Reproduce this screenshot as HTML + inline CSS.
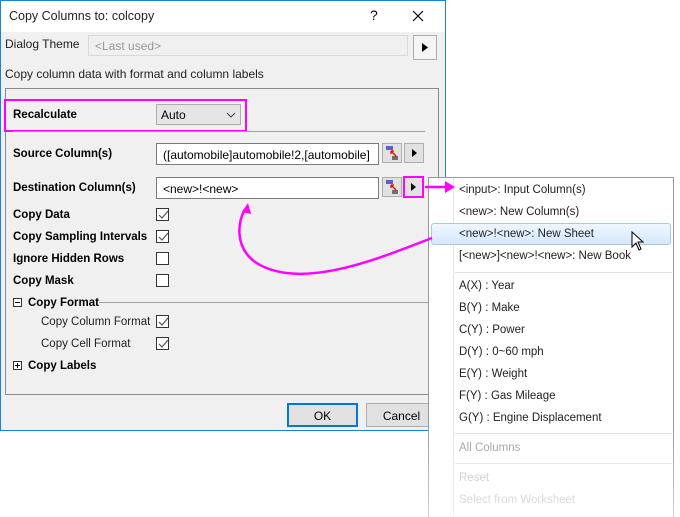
<!DOCTYPE html>
<html><head><meta charset="utf-8"><style>
*{margin:0;padding:0;box-sizing:border-box}
body{width:680px;height:517px;background:#fff;position:relative;overflow:hidden;font-family:"Liberation Sans",sans-serif;font-size:12px;color:#000}
.a{position:absolute}
.dlg{left:0;top:0;width:446px;height:431px;border:1px solid #1883d7;background:#f0f0f0}
.title{left:1px;top:1px;width:444px;height:31px;background:#fff}
.b{font-weight:bold;font-size:11.5px}
.cb{width:13px;height:13px;border:1px solid #333;background:#fff}
.cb svg{position:absolute;left:1px;top:1px}
.btn{background:#e1e1e1;border:1px solid #adadad;text-align:center}
.mi{left:459px;font-size:11.5px;color:#222}
.sep{height:1px;background:#e0e0e0;left:455px;width:217px}
</style></head><body>
<div class="a dlg"></div>
<div class="a title"></div>
<div class="a" style="left:9px;top:9px;font-size:12.5px;color:#222">Copy Columns to: colcopy</div>
<div class="a" style="left:370px;top:7px;font-size:14px">?</div>
<svg class="a" style="left:412px;top:10px" width="12" height="12"><path d="M1 1L11 11M11 1L1 11" stroke="#000" stroke-width="1.2"/></svg>
<div class="a" style="left:5px;top:37px;font-size:12px;color:#222">Dialog Theme</div>
<div class="a" style="left:88px;top:35px;width:320px;height:21px;border:1px solid #d9d9d9;background:#f0f0f0;color:#999;padding:3px 6px;font-size:12px">&lt;Last used&gt;</div>
<div class="a btn" style="left:413px;top:35px;width:24px;height:25px;background:#f5f5f5"><svg width="22" height="23"><path d="M8 7L14 11.5L8 16Z" fill="#000"/></svg></div>
<div class="a" style="left:5px;top:67px;color:#222">Copy column data with format and column labels</div>
<div class="a" style="left:5px;top:88px;width:434px;height:307px;border:1px solid #8a8a8a"></div>
<div class="a" style="left:4px;top:99px;width:243px;height:33px;border:2px solid #ff00ff"></div>
<div class="a b" style="left:13px;top:109px">Recalculate</div>
<div class="a" style="left:156px;top:104px;width:85px;height:21px;border:1px solid #adadad;background:#e5e5e5;padding:3px 4px">Auto</div>
<svg class="a" style="left:226px;top:111px" width="10" height="8"><path d="M1 2L5 6L9 2" stroke="#444" fill="none"/></svg>
<div class="a" style="left:13px;top:131px;width:412px;height:1px;background:#a0a0a0"></div>
<div class="a b" style="left:13px;top:148px">Source Column(s)</div>
<div class="a" style="left:156px;top:143px;width:223px;height:22px;border:1px solid #7a7a7a;background:#fff;padding:4px 6px;white-space:nowrap;overflow:hidden">([automobile]automobile!2,[automobile]</div>
<div class="a b" style="left:13px;top:182px">Destination Column(s)</div>
<div class="a" style="left:156px;top:177px;width:223px;height:22px;border:1px solid #7a7a7a;background:#fff;padding:4px 6px">&lt;new&gt;!&lt;new&gt;</div>
<div class="a btn" style="left:382px;top:143px;width:20px;height:20px"><svg width="18" height="18"><path d="M3 3H10M3 5H10" stroke="#11c" stroke-width="1.2"/><path d="M8 7L13 12M8 7V10M8 7H11" stroke="#e00" stroke-width="1.3" fill="none"/><path d="M9 13H15M9 15H15" stroke="#000"/></svg></div>
<div class="a btn" style="left:404px;top:143px;width:20px;height:20px"><svg width="18" height="18"><path d="M7 5L12 9L7 13Z" fill="#000"/></svg></div>
<div class="a btn" style="left:382px;top:177px;width:20px;height:20px"><svg width="18" height="18"><path d="M3 3H10M3 5H10" stroke="#11c" stroke-width="1.2"/><path d="M8 7L13 12M8 7V10M8 7H11" stroke="#e00" stroke-width="1.3" fill="none"/><path d="M9 13H15M9 15H15" stroke="#000"/></svg></div>
<div class="a btn" style="left:403px;top:176px;width:21px;height:22px;border:2px solid #ff00ff"><svg width="17" height="18"><path d="M6 5L11 9L6 13Z" fill="#000"/></svg></div>
<div class="a b" style="left:13px;top:209px">Copy Data</div>
<div class="a b" style="left:13px;top:231px">Copy Sampling Intervals</div>
<div class="a b" style="left:13px;top:253px">Ignore Hidden Rows</div>
<div class="a b" style="left:13px;top:275px">Copy Mask</div>
<div class="a cb" style="left:156px;top:208px"><svg width="11" height="11"><path d="M1 5L4 8L10 1" stroke="#555" fill="none" stroke-width="1.2"/></svg></div>
<div class="a cb" style="left:156px;top:230px"><svg width="11" height="11"><path d="M1 5L4 8L10 1" stroke="#555" fill="none" stroke-width="1.2"/></svg></div>
<div class="a cb" style="left:156px;top:252px"></div>
<div class="a cb" style="left:156px;top:274px"></div>
<div class="a" style="left:13px;top:298px;width:9px;height:9px;border:1px solid #333;background:#fff"><div class="a" style="left:1px;top:3px;width:5px;height:1px;background:#000"></div></div>
<div class="a b" style="left:28px;top:297px">Copy Format</div>
<div class="a" style="left:99px;top:302px;width:329px;height:1px;background:#a0a0a0"></div>
<div class="a" style="left:41px;top:316px;color:#222;font-size:11.5px">Copy Column Format</div>
<div class="a" style="left:41px;top:338px;color:#222;font-size:11.5px">Copy Cell Format</div>
<div class="a cb" style="left:156px;top:315px"><svg width="11" height="11"><path d="M1 5L4 8L10 1" stroke="#555" fill="none" stroke-width="1.2"/></svg></div>
<div class="a cb" style="left:156px;top:337px"><svg width="11" height="11"><path d="M1 5L4 8L10 1" stroke="#555" fill="none" stroke-width="1.2"/></svg></div>
<div class="a" style="left:13px;top:361px;width:9px;height:9px;border:1px solid #333;background:#fff"><div class="a" style="left:1px;top:3px;width:5px;height:1px;background:#000"></div><div class="a" style="left:3px;top:1px;width:1px;height:5px;background:#000"></div></div>
<div class="a b" style="left:28px;top:360px">Copy Labels</div>
<div class="a btn" style="left:287px;top:403px;width:71px;height:24px;border:2px solid #0078d7;padding-top:4px">OK</div>
<div class="a btn" style="left:366px;top:403px;width:71px;height:24px;padding-top:5px">Cancel</div>
<!-- menu -->
<div class="a" style="left:428px;top:177px;width:246px;height:340px;background:#fff;border:1px solid #979797;border-bottom:none"></div>
<div class="a" style="left:453px;top:178px;width:1px;height:339px;background:#e4e4e4"></div>
<div class="a" style="left:431px;top:223px;width:240px;height:22px;border:1px solid #a8c8e8;border-radius:3px;background:linear-gradient(#f0f7ff,#d4e8fc)"></div>
<div class="a mi" style="top:184px">&lt;input&gt;: Input Column(s)</div>
<div class="a mi" style="top:206px">&lt;new&gt;: New Column(s)</div>
<div class="a mi" style="top:228px">&lt;new&gt;!&lt;new&gt;: New Sheet</div>
<div class="a mi" style="top:250px">[&lt;new&gt;]&lt;new&gt;!&lt;new&gt;: New Book</div>
<div class="a sep" style="top:272px"></div>
<div class="a mi" style="top:280px">A(X) : Year</div>
<div class="a mi" style="top:302px">B(Y) : Make</div>
<div class="a mi" style="top:324px">C(Y) : Power</div>
<div class="a mi" style="top:346px">D(Y) : 0~60 mph</div>
<div class="a mi" style="top:368px">E(Y) : Weight</div>
<div class="a mi" style="top:390px">F(Y) : Gas Mileage</div>
<div class="a mi" style="top:412px">G(Y) : Engine Displacement</div>
<div class="a sep" style="top:433px"></div>
<div class="a mi" style="top:442px;color:#999">All Columns</div>
<div class="a sep" style="top:463px"></div>
<div class="a mi" style="top:472px;color:#bbb">Reset</div>
<div class="a mi" style="top:494px;color:#bbb">Select from Worksheet</div>
<div class="a" style="left:427px;top:420px;width:253px;height:97px;background:linear-gradient(rgba(255,255,255,0),rgba(255,255,255,.55))"></div>
<svg class="a" style="left:0;top:0" width="680" height="517">
<path d="M425 187H448" stroke="#ff00ff" stroke-width="2.5"/><path d="M445 181L455 187L445 193Z" fill="#ff00ff"/>
<path d="M432 238C380 258 300 292 255 262C234 246 238 222 245 209" stroke="#ff00ff" stroke-width="2.5" fill="none"/>
<path d="M242 212L248 203L251 214Z" fill="#ff00ff"/>
<path d="M632 232V247L636 243L639 250L641 249L638 242H643Z" fill="#fff" stroke="#000" stroke-width="1"/>
</svg>
</body></html>
